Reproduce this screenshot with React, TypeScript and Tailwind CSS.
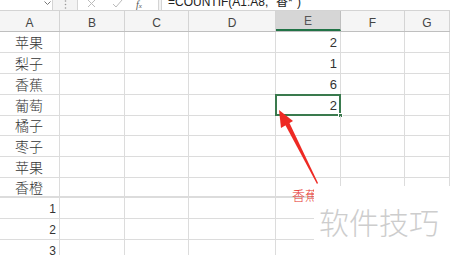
import React from "react";

const cols = [
  { name: "A", w: 60 },
  { name: "B", w: 65 },
  { name: "C", w: 64 },
  { name: "D", w: 87 },
  { name: "E", w: 65 },
  { name: "F", w: 64 },
  { name: "G", w: 45 },
];

const rowH = [21, 21, 21, 21, 20, 21, 21, 20, 21, 21, 21];
const colA = ["苹果", "梨子", "香蕉", "葡萄", "橘子", "枣子", "苹果", "香橙", "1", "2", "3"];
const colE = ["2", "1", "6", "2"];

export default function App() {
  return (
    <div className="relative w-[450px] h-[255px] overflow-hidden bg-white font-['Liberation_Sans','Noto_Sans_CJK_SC',sans-serif] text-[#333]">
      {/* toolbar / formula bar */}
      <div className="flex h-[11px] bg-[#f3f3f3] border-b border-[#d4d4d4] overflow-hidden">
        <div className="relative w-[53px] h-full bg-white border-r border-[#d4d4d4]">
          <svg className="absolute left-[44px] top-[1px]" width="7" height="4" viewBox="0 0 7 4">
            <path d="M0.5 0.5 L3.5 3.5 L6.5 0.5" fill="none" stroke="#777" strokeWidth="1" />
          </svg>
        </div>
        <div className="w-[24px] flex justify-center">
          <svg width="3" height="10" viewBox="0 0 3 10">
            <circle cx="1.5" cy="1" r="0.8" fill="#999" />
            <circle cx="1.5" cy="4.5" r="0.8" fill="#999" />
            <circle cx="1.5" cy="8" r="0.8" fill="#999" />
          </svg>
        </div>
        <div className="relative w-[82px] h-full bg-white border-x border-[#d4d4d4]">
          <svg className="absolute left-[9px] top-0" width="9" height="8" viewBox="0 0 9 8">
            <path d="M1 0 L8 7 M8 0 L1 7" stroke="#bbb" strokeWidth="1" />
          </svg>
          <svg className="absolute left-[34px] top-0" width="11" height="8" viewBox="0 0 11 8">
            <path d="M1 4 L4 7 L10 0" fill="none" stroke="#bbb" strokeWidth="1" />
          </svg>
          <span className="absolute left-[58px] top-[-3px] text-[10px] italic font-['Liberation_Serif',serif] text-[#555]">f<span className="text-[7px]">x</span></span>
        </div>
        <div className="relative flex-1 ml-[2px] bg-white border-l border-[#d4d4d4]">
          <span className="absolute left-[6px] top-[-5px] text-[12px] leading-[14px] whitespace-nowrap text-[#222]">=COUNTIF(A1:A8, "香*")</span>
        </div>
      </div>

      {/* column headers */}
      <div className="flex h-[21px] bg-[#f5f5f5] border-b border-[#bfbfbf]">
        {cols.map((c) => (
          <div
            key={c.name}
            style={{ width: c.w }}
            className={
              c.name === "E"
                ? "h-full flex items-end justify-center pb-[1px] text-[12px] leading-[14px] text-[#555] bg-[#d6d6d6] border-r border-[#bfbfbf] border-b-2 border-b-[#217346] shrink-0"
                : "h-full flex items-end justify-center pb-[1px] text-[12px] leading-[14px] text-[#444] border-r border-[#d4d4d4] shrink-0"
            }
          >
            {c.name}
          </div>
        ))}
      </div>

      {/* rows */}
      {rowH.map((h, r) => (
        <div
          key={r}
          style={{ height: h }}
          className={r === 7 ? "flex border-b-2 border-[#dcdcdc]" : "flex border-b border-[#dcdcdc]"}
        >
          {cols.map((c) => {
            let content: React.ReactNode = null;
            let cls = "relative h-full shrink-0 border-r border-[#dcdcdc] flex items-center";
            if (c.name === "A") {
              const v = colA[r];
              const isNum = /^\d$/.test(v);
              content = v;
              cls += isNum
                ? " justify-end pr-[3px] text-[12px] pt-[1px]"
                : " justify-start pl-[15px] text-[14px] pt-[2px] font-light";
            }
            if (c.name === "E" && r < colE.length) {
              content = colE[r];
              cls += " justify-end pr-[3px] text-[13px] pt-[1px]";
            }
            return (
              <div key={c.name} style={{ width: c.w }} className={cls}>
                {content}
                {c.name === "E" && r === 3 && (
                  <>
                    <div className="absolute left-[-1px] top-[-1px] right-[-1px] bottom-[-1px] border-2 border-[#3a7a4e]" />
                    <div className="absolute right-[-3px] bottom-[-3px] w-[5px] h-[5px] bg-[#3a7a4e] border border-white" />
                  </>
                )}
              </div>
            );
          })}
        </div>
      ))}

      {/* red arrow */}
      <svg className="absolute left-0 top-0 pointer-events-none" width="450" height="255" viewBox="0 0 450 255">
        <polygon points="279,110 293,121 281,128" fill="#ee2a24" />
        <polygon points="284.5,123.5 289,122 318,183 317,184" fill="#ee2a24" />
      </svg>

      <span className="absolute left-[292px] top-[188px] text-[13px] leading-[16px] text-[#e5322d] whitespace-nowrap font-light">香蕉</span>

      {/* watermark */}
      <div className="absolute left-[314px] top-[186px] w-[136px] h-[69px] bg-white flex items-center pl-[5px]">
        <span className="text-[30px] leading-[34px] text-[#cdcdcd] font-light font-['Noto_Sans_CJK_SC',sans-serif] whitespace-nowrap">软件技巧</span>
      </div>
    </div>
  );
}
